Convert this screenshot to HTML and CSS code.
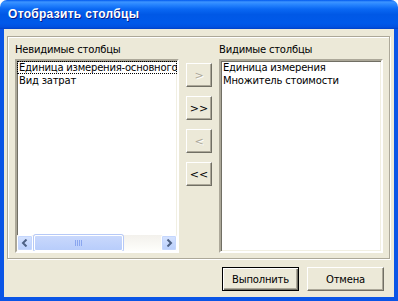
FILE: index.html
```html
<!DOCTYPE html>
<html lang="ru">
<head>
    <meta charset="UTF-8">
    <title>Отобразить столбцы</title>
    <link rel="stylesheet" href="styles.css">
</head>
<body>
    <div class="window">
        <div class="titlebar">Отобразить столбцы</div>
        <div class="frame">
            <div class="group">
                <div class="column">
                    <div class="label">Невидимые столбцы</div>
                    <div class="listbox">
                        <div class="items">
                            <div class="item focused">Единица измерения-основного</div>
                            <div class="item">Вид затрат</div>
                        </div>
                        <div class="hscroll">
                            <div class="sb-btn">
                                <svg width="8" height="8" viewBox="0 0 8 8"><path d="M5.5 0.5 L2 4 L5.5 7.5" fill="none" stroke="#4d6185" stroke-width="2"/></svg>
                            </div>
                            <div class="sb-track">
                                <div class="sb-thumb">
                                    <svg width="8" height="6" viewBox="0 0 8 6"><path d="M0.5 0V6M2.5 0V6M4.5 0V6M6.5 0V6" stroke="#8aa6ef" stroke-width="1"/></svg>
                                </div>
                            </div>
                            <div class="sb-btn">
                                <svg width="8" height="8" viewBox="0 0 8 8"><path d="M2.5 0.5 L6 4 L2.5 7.5" fill="none" stroke="#4d6185" stroke-width="2"/></svg>
                            </div>
                        </div>
                    </div>
                </div>
                <div class="movers">
                    <button class="btn mover" disabled>&gt;</button>
                    <button class="btn mover">&gt;&gt;</button>
                    <button class="btn mover" disabled>&lt;</button>
                    <button class="btn mover">&lt;&lt;</button>
                </div>
                <div class="column">
                    <div class="label">Видимые столбцы</div>
                    <div class="listbox">
                        <div class="items">
                            <div class="item">Единица измерения</div>
                            <div class="item">Множитель стоимости</div>
                        </div>
                    </div>
                </div>
            </div>
            <div class="actions">
                <button class="btn action default">Выполнить</button>
                <button class="btn action">Отмена</button>
            </div>
        </div>
    </div>
</body>
</html>
```

FILE: styles.css
```css
html, body {
    margin: 0;
    padding: 0;
    background: #fff;
}

body {
    font-family: 'DejaVu Sans', sans-serif;
    font-size: 10px;
    letter-spacing: -0.2px;
    color: #000;
}

.window {
    width: 398px;
    height: 301px;
    display: flex;
    flex-direction: column;
}

.titlebar {
    height: 29px;
    box-sizing: border-box;
    padding: 7px 0 0 8px;
    border-radius: 7px 7px 0 0;
    background: linear-gradient(to bottom, #0058ee 0, #3d95ff 2px, #2b88ff 4px, #0a68f3 9px, #0058e6 50%, #0059ea 80%, #0151e0 93%, #0040c8 100%);
    color: #fff;
    font-family: 'Liberation Sans', sans-serif;
    font-weight: bold;
    font-size: 12px;
    letter-spacing: 0.3px;
    text-shadow: 1px 1px 0 #0a1e8c;
}

.frame {
    flex: 1;
    display: flex;
    flex-direction: column;
    background: #ece9d8;
    border: 4px solid #0a55e6;
    border-top: none;
}

.group {
    margin: 7px 4px 0 3px;
    height: 223px;
    box-sizing: border-box;
    border: 1px solid #aca899;
    box-shadow: inset 1px 1px 0 #fff, 1px 1px 0 #fff;
    padding: 6px 5px 0 7px;
    display: flex;
    gap: 7px;
}

.column {
    width: 164px;
    display: flex;
    flex-direction: column;
}

.label {
    height: 13px;
    line-height: 13px;
    margin-bottom: 3px;
}

.listbox {
    height: 194px;
    box-sizing: border-box;
    background: #fff;
    border: 2px solid;
    border-color: #aca899 #fff #fff #aca899;
    box-shadow: inset 1px 1px 0 #716f64, inset -1px -1px 0 #f1efe2;
    display: flex;
    flex-direction: column;
    overflow: hidden;
}

.items {
    flex: 1;
    overflow: hidden;
}

.item {
    height: 13px;
    line-height: 13px;
    padding-left: 2px;
    white-space: nowrap;
    overflow: hidden;
}

.item.focused {
    outline: 1px dotted #000;
    outline-offset: -1px;
}

.hscroll {
    height: 16px;
    display: flex;
    background: linear-gradient(to bottom, #f3f1ec, #fefefb);
}

.sb-btn {
    width: 16px;
    box-sizing: border-box;
    border: 1px solid #fff;
    border-radius: 2px;
    background: linear-gradient(to bottom, #d6e3fe, #b9cffd);
    box-shadow: inset 0 0 0 1px #c4d6fd;
    display: flex;
    align-items: center;
    justify-content: center;
}

.sb-track {
    flex: 1;
    padding: 0 38px 0 1px;
    display: flex;
}

.sb-thumb {
    flex: 1;
    box-sizing: border-box;
    border: 1px solid #fff;
    border-radius: 2px;
    background: linear-gradient(to bottom, #c9d8fc, #b8cdfb);
    box-shadow: 0 0 0 1px #b6c9f7;
    display: flex;
    align-items: center;
    justify-content: center;
}

.movers {
    width: 26px;
    display: flex;
    flex-direction: column;
    gap: 9px;
    padding-top: 20px;
}

.btn {
    font-family: 'DejaVu Sans', sans-serif;
    font-size: 10px;
    letter-spacing: -0.2px;
    color: #000;
    background: #ece9d8;
    border: 1px solid;
    border-color: #fff #716f64 #716f64 #fff;
    box-shadow: inset -1px -1px 0 #aca899;
    padding: 0;
    margin: 0;
}

.btn:disabled {
    color: #aca899;
    text-shadow: 1px 1px 0 #fff;
}

.mover {
    width: 26px;
    height: 24px;
    font-size: 11px;
    letter-spacing: 0;
}

.actions {
    display: flex;
    justify-content: flex-end;
    gap: 8px;
    padding: 8px 10px 0 0;
}

.action {
    width: 77px;
    height: 24px;
}

.action.default {
    outline: 1px solid #000;
    outline-offset: -1px;
    border-color: #000;
    box-shadow: inset 1px 1px 0 #fff, inset -1px -1px 0 #716f64, inset -2px -2px 0 #aca899;
}
```
